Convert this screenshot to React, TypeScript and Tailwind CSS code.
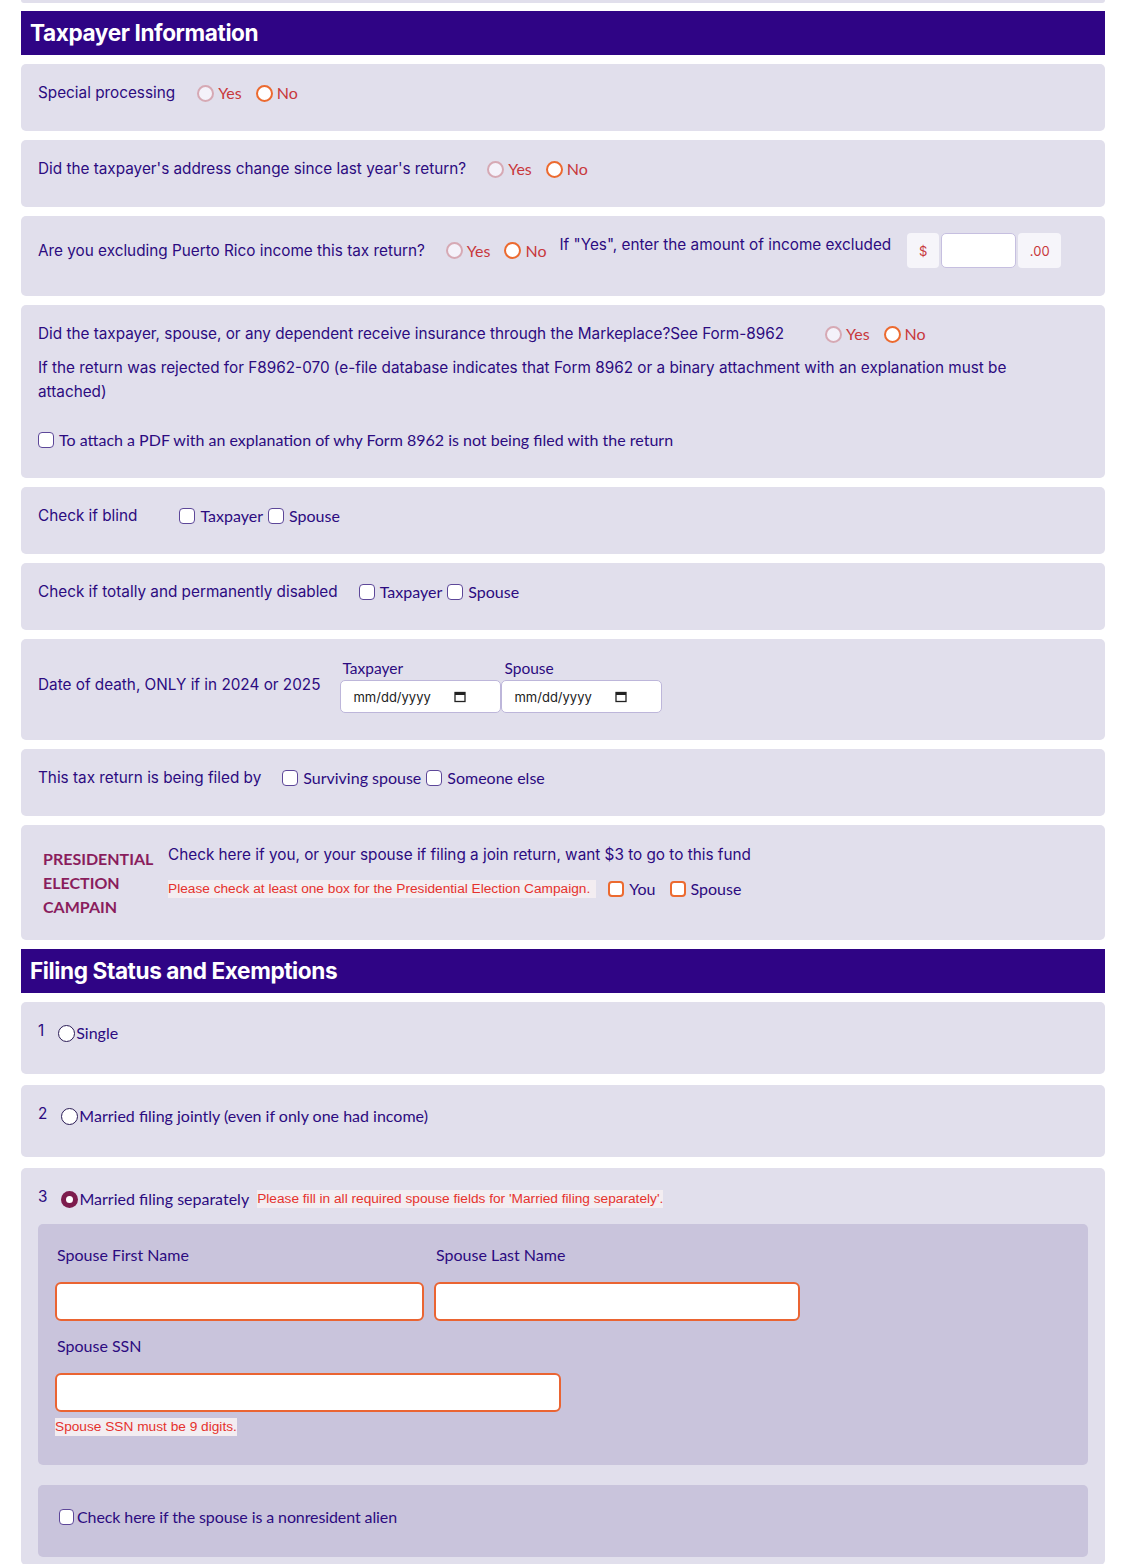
import React from "react";

const INK = "text-[#2c0b80]";

function YesNo() {
  return (
    <div className="flex shrink-0 items-center gap-[14px] font-['Lato',sans-serif] text-[16px] text-[#c8383c]">
      <label className="flex items-center gap-[4px]">
        <span className="size-[17px] rounded-full border-2 border-[#d6a9b4] bg-[#f4f2fa]" />
        Yes
      </label>
      <label className="flex items-center gap-[4px]">
        <span className="size-[17px] rounded-full border-2 border-[#ec6a2f] bg-white" />
        No
      </label>
    </div>
  );
}

function Box({ label, orange = false }: { label: string; orange?: boolean }) {
  return (
    <label className="flex items-center gap-[5px]">
      <span
        className={
          orange
            ? "size-[16px] rounded-[4px] border-2 border-[#ec6a2f] bg-white"
            : "size-[16px] rounded-[4px] border-[1.5px] border-[#5d4799] bg-white"
        }
      />
      {label}
    </label>
  );
}

function DateBox() {
  return (
    <div className="flex h-[33px] w-[161px] items-center rounded-[5px] border border-[#bdb6da] bg-white pl-[12px] text-[13px] text-[#222]">
      <span className="w-[101px]">mm/dd/yyyy</span>
      <svg width="12" height="12" viewBox="0 0 12 12">
        <rect x="1" y="1.5" width="10" height="9" fill="none" stroke="#222" strokeWidth="1.3" />
        <rect x="1" y="1.5" width="10" height="2.5" fill="#222" />
      </svg>
    </div>
  );
}

function Card({ className = "", children }: { className?: string; children: React.ReactNode }) {
  return <div className={"rounded-[5px] bg-[#e1dfec] px-[17px] " + className}>{children}</div>;
}

function Header({ title }: { title: string }) {
  return (
    <div className="flex h-[44px] items-center bg-[#2f0485] pl-[9px] text-[22.6px] font-bold tracking-[-0.4px] text-white">
      {title}
    </div>
  );
}

function Err({ children, className = "" }: { children: React.ReactNode; className?: string }) {
  return (
    <span className={"whitespace-nowrap bg-[#f3edf1] font-['Liberation_Sans',Arial,sans-serif] text-[13.7px] leading-[18px] text-[#e5322d] " + className}>
      {children}
    </span>
  );
}

function FilingRadio({ checked = false }: { checked?: boolean }) {
  return checked ? (
    <span className="flex size-[17px] items-center justify-center rounded-full bg-[#7d1c4d]">
      <span className="size-[7px] rounded-full bg-white" />
    </span>
  ) : (
    <span className="size-[17px] rounded-full border-[1.5px] border-[#2a1b55] bg-white" />
  );
}

export default function App() {
  return (
    <div className={"min-h-screen bg-white pl-[21px] pr-[19px] font-['Inter',sans-serif] text-[15.3px] leading-6 " + INK}>
      <div className="mb-[8px] h-[3px] rounded-b-[5px] bg-[#e1dfec]" />
      <div className="flex flex-col gap-[9px]">
        <Header title="Taxpayer Information" />

        <Card className="pt-[17px] pb-[26px]">
          <div className="flex items-center">
            <span className="mr-[22px]">Special processing</span>
            <YesNo />
          </div>
        </Card>

        <Card className="pt-[17px] pb-[26px]">
          <div className="flex items-center">
            <span className="mr-[21px]">Did the taxpayer's address change since last year's return?</span>
            <YesNo />
          </div>
        </Card>

        <Card className="pt-[17px] pb-[28px]">
          <div className="flex items-center whitespace-nowrap">
            <span className="mr-[21px]">Are you excluding Puerto Rico income this tax return?</span>
            <YesNo />
            <span className="ml-[13px] self-start">If "Yes", enter the amount of income excluded</span>
            <div className="ml-[16px] flex h-[35px] shrink-0 items-center gap-[2px] text-[13px] text-[#c8383c]">
              <span className="flex h-full w-[32px] items-center justify-center rounded-[4px] bg-[#f6f5fa]">$</span>
              <span className="h-full w-[75px] rounded-[5px] border border-[#c6bfe0] bg-white" />
              <span className="flex h-full w-[43px] items-center justify-center rounded-[4px] bg-[#f6f5fa]">.00</span>
            </div>
          </div>
        </Card>

        <Card className="pt-[17px] pb-[26px]">
          <div className="flex items-center">
            <span className="mr-[41px]">Did the taxpayer, spouse, or any dependent receive insurance through the Markeplace?See Form-8962</span>
            <YesNo />
          </div>
          <p className="mt-[10px] pr-[60px]">
            If the return was rejected for F8962-070 (e-file database indicates that Form 8962 or a binary attachment with an explanation must be attached)
          </p>
          <div className="mt-[24px] font-['Lato',sans-serif] text-[16px]">
            <Box label="To attach a PDF with an explanation of why Form 8962 is not being filed with the return" />
          </div>
        </Card>

        <Card className="pt-[17px] pb-[26px]">
          <div className="flex items-center">
            <span className="mr-[42px]">Check if blind</span>
            <div className="flex items-center gap-[5px] font-['Lato',sans-serif] text-[16px]">
              <Box label="Taxpayer" />
              <Box label="Spouse" />
            </div>
          </div>
        </Card>

        <Card className="pt-[17px] pb-[26px]">
          <div className="flex items-center">
            <span className="mr-[21px]">Check if totally and permanently disabled</span>
            <div className="flex items-center gap-[5px] font-['Lato',sans-serif] text-[16px]">
              <Box label="Taxpayer" />
              <Box label="Spouse" />
            </div>
          </div>
        </Card>

        <Card className="pt-[17px] pb-[27px]">
          <div className="flex items-center">
            <span className="mr-[20px]">Date of death, ONLY if in 2024 or 2025</span>
            <div className="flex">
              <div className="flex flex-col">
                <span className="pl-[2px] font-['Lato',sans-serif] text-[15.5px] leading-[24px]">Taxpayer</span>
                <DateBox />
              </div>
              <div className="flex flex-col">
                <span className="pl-[3px] font-['Lato',sans-serif] text-[15.5px] leading-[24px]">Spouse</span>
                <DateBox />
              </div>
            </div>
          </div>
        </Card>

        <Card className="pt-[17px] pb-[26px]">
          <div className="flex items-center">
            <span className="mr-[21px]">This tax return is being filed by</span>
            <div className="flex items-center gap-[5px] font-['Lato',sans-serif] text-[16px]">
              <Box label="Surviving spouse" />
              <Box label="Someone else" />
            </div>
          </div>
        </Card>

        <Card className="pt-[18px] pb-[21px]">
          <div className="flex">
            <div className="mt-[4px] w-[130px] pl-[5px] font-['Lato',sans-serif] text-[16px] font-bold leading-6 text-[#8a1d5d]">
              PRESIDENTIAL
              <br />
              ELECTION
              <br />
              CAMPAIN
            </div>
            <div className="flex flex-col">
              <span>Check here if you, or your spouse if filing a join return, want $3 to go to this fund</span>
              <div className="mt-[10px] flex items-center">
                <Err className="pr-[6px]">Please check at least one box for the Presidential Election Campaign.</Err>
                <div className="ml-[12px] flex items-center gap-[14px] font-['Lato',sans-serif] text-[16px]">
                  <Box label="You" orange />
                  <Box label="Spouse" orange />
                </div>
              </div>
            </div>
          </div>
        </Card>

        <Header title="Filing Status and Exemptions" />

        <Card className="pt-[19px] pb-[29px]">
          <div className="flex items-center font-['Lato',sans-serif] text-[16px]">
            <span className="mr-[14px] -mt-[4px] font-['Inter',sans-serif] text-[15.3px]">1</span>
            <FilingRadio />
            <span className="ml-[1px]">Single</span>
          </div>
        </Card>

        <Card className="mt-[2px] pt-[19px] pb-[29px]">
          <div className="flex items-center font-['Lato',sans-serif] text-[16px]">
            <span className="mr-[14px] -mt-[4px] font-['Inter',sans-serif] text-[15.3px]">2</span>
            <FilingRadio />
            <span className="ml-[1px]">Married filing jointly (even if only one had income)</span>
          </div>
        </Card>

        <Card className="mt-[2px] pt-[19px] pb-[8px]">
          <div className="flex items-center font-['Lato',sans-serif] text-[16px]">
            <span className="mr-[14px] -mt-[4px] font-['Inter',sans-serif] text-[15.3px]">3</span>
            <FilingRadio checked />
            <span className="ml-[1px]">Married filing separately</span>
            <Err className="ml-[8px]">Please fill in all required spouse fields for 'Married filing separately'.</Err>
          </div>

          <div className="mt-[13px] rounded-[5px] bg-[#c9c4dc] px-[17px] pt-[20px] pb-[29px] font-['Lato',sans-serif] text-[16px]">
            <div className="flex gap-[10px]">
              <div className="flex flex-col">
                <span className="pl-[2px] leading-[22px]">Spouse First Name</span>
                <span className="mt-[16px] h-[39px] w-[369px] rounded-[6px] border-2 border-[#ea6432] bg-white" />
              </div>
              <div className="flex flex-col">
                <span className="pl-[2px] leading-[22px]">Spouse Last Name</span>
                <span className="mt-[16px] h-[39px] w-[366px] rounded-[6px] border-2 border-[#ea6432] bg-white" />
              </div>
            </div>
            <div className="mt-[14px] pl-[2px] leading-[22px]">Spouse SSN</div>
            <div className="mt-[16px] h-[39px] w-[506px] rounded-[6px] border-2 border-[#ea6432] bg-white" />
            <div className="mt-[6px] flex">
              <Err>Spouse SSN must be 9 digits.</Err>
            </div>
          </div>

          <div className="mt-[20px] flex h-[72px] items-start rounded-[5px] bg-[#c9c4dc] px-[21px] pt-[20px] font-['Lato',sans-serif] text-[16px] tracking-[-0.1px]">
            <label className="flex items-center gap-[3px]">
              <span className="h-[16px] w-[15px] rounded-[4px] border-[1.5px] border-[#5d4799] bg-white" />
              Check here if the spouse is a nonresident alien
            </label>
          </div>
        </Card>
      </div>
    </div>
  );
}
